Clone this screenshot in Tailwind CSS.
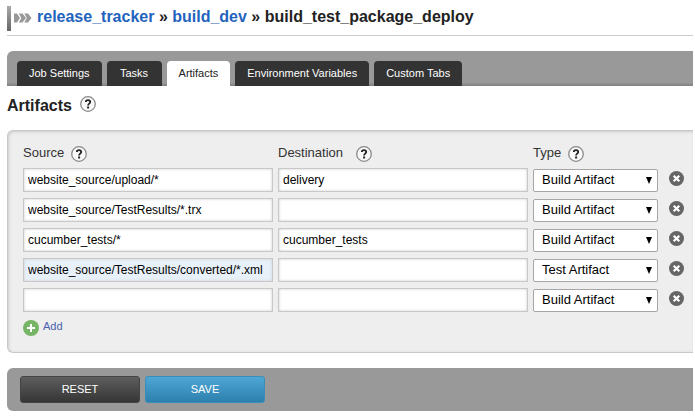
<!DOCTYPE html>
<html lang="en">
<head>
<meta charset="utf-8">
<meta name="viewport" content="width=device-width, initial-scale=1">
<title>build_test_package_deploy - Artifacts</title>
<script src="https://cdn.jsdelivr.net/npm/@tailwindcss/browser@4"></script>
</head>
<body class="bg-white pl-[7px] pr-[2px] font-['Liberation_Sans',Arial,sans-serif] text-[#222]">
<svg class="hidden">
  <symbol id="help" viewBox="0 0 16 16"><circle cx="8" cy="8" r="7.3" fill="#f8f8f8" stroke="#8a8a8a" stroke-width="1.3"/><path d="M5.8 6.1C5.8 3.5 10.2 3.5 10.2 6.1C10.2 7.7 8.1 7.6 8.1 9.4" fill="none" stroke="#222" stroke-width="1.8"/><path d="M7.1 10.5h2v2h-2z" fill="#222"/></symbol>
  <symbol id="remove" viewBox="0 0 15 15"><circle cx="7.5" cy="7.5" r="7.5" fill="#666"/><path d="M4.700 4.700l5.600 5.600M10.300 4.700l-5.600 5.600" stroke="#fff" stroke-width="2.200"/></symbol>
</svg>
<header class="flex h-9 items-start border-b border-[#ccc] pt-[6px]">
  <svg class="mr-[5px] h-[25px] w-[25px]" viewBox="0 0 25 25" aria-hidden="true">
    <defs><linearGradient id="bar" x1="0" y1="0" x2="0" y2="1"><stop offset="0" stop-color="#aaa"/><stop offset="1" stop-color="#666"/></linearGradient></defs>
    <path d="M0 0h4v25H0z" fill="url(#bar)"/>
    <path d="M7 7.500h3l3 4.500-3 4.500H7zM11.800 7.500h3.700l3.500 4.500-3.500 4.500h-3.700l2.500-4.500zM17.300 7.500h3.700l3.500 4.500-3.500 4.500h-3.700l2.500-4.500z" fill="#999"/>
  </svg>
  <h1 class="text-[16px] leading-[22px] font-bold whitespace-nowrap"><a href="#" class="text-[#1f63bd]">release_tracker</a> » <a href="#" class="text-[#1f63bd]">build_dev</a> » build_test_package_deploy</h1>
</header>
<main>
  <nav class="mt-[15px] flex h-[35px] items-end gap-[5px] rounded-tl-md bg-linear-to-b from-[#999] from-90% to-[#808080] pl-[10px] text-center text-[11px] leading-[25px] whitespace-nowrap text-white">
    <a href="#" class="min-w-[55px] rounded-t bg-[#333] px-3">Job Settings</a>
    <a href="#" class="min-w-[55px] rounded-t bg-[#333] px-3">Tasks</a>
    <a href="#" aria-current="page" class="min-w-[55px] rounded-t bg-white px-3 text-[#222]">Artifacts</a>
    <a href="#" class="min-w-[55px] rounded-t bg-[#333] px-3">Environment Variables</a>
    <a href="#" class="min-w-[55px] rounded-t bg-[#333] px-3">Custom Tabs</a>
  </nav>
  <div class="mt-2 flex h-5 items-start gap-2">
    <h2 class="text-[16px] leading-6 font-bold">Artifacts</h2>
    <button type="button" aria-label="Help with artifacts" class="mt-[2px]"><svg class="size-4"><use href="#help"/></svg></button>
  </div>
  <form>
    <section class="mt-4 rounded-l-md border border-r-0 border-[#c8c8c8] bg-[#eee] pt-[9px] pr-[9px] pb-4 pl-[15px] shadow-[inset_1px_1px_3px_#ccc]">
      <table class="w-full table-fixed">
        <colgroup><col><col><col class="w-[130px]"><col class="w-[21px]"></colgroup>
        <thead>
          <tr class="h-[25px] text-left text-[13px] text-[#333]">
            <th scope="col" class="p-0 font-normal"><div class="flex h-[25px] gap-[7px]"><span class="leading-[26px]">Source</span><button type="button" aria-label="Help with source" class="mt-[6px] size-4"><svg class="size-4"><use href="#help"/></svg></button></div></th>
            <th scope="col" class="p-0 font-normal"><div class="flex h-[25px] gap-[13px]"><span class="leading-[26px]">Destination</span><button type="button" aria-label="Help with destination" class="mt-[6px] size-4"><svg class="size-4"><use href="#help"/></svg></button></div></th>
            <th scope="col" class="p-0 font-normal"><div class="flex h-[25px] gap-[7px]"><span class="leading-[26px]">Type</span><button type="button" aria-label="Help with type" class="mt-[6px] size-4"><svg class="size-4"><use href="#help"/></svg></button></div></th>
            <td></td>
          </tr>
        </thead>
        <tbody id="rows"></tbody>
      </table>
      <button type="button" class="mt-[5px] flex gap-1 text-[11px] leading-3 text-[#4a5fb0]">
        <svg class="size-4" viewBox="0 0 16 16" aria-hidden="true"><circle cx="8" cy="8" r="8" fill="#76b565"/><path d="M8 4v8M4 8h8" stroke="#fff" stroke-width="2"/></svg>
        Add
      </button>
    </section>
    <footer class="mt-[15px] flex gap-[5px] rounded-l-md bg-[#999] px-[13px] py-2 text-[11px] text-white">
      <button type="reset" class="h-[27px] w-[120px] rounded-[3px] border border-[#444] bg-linear-to-b from-[#5e5e5e] to-[#363636]">RESET</button>
      <button type="submit" class="h-[27px] w-[120px] rounded-[3px] border border-[#388db9] bg-linear-to-b from-[#4fa7d5] to-[#2b80ae]">SAVE</button>
    </footer>
  </form>
</main>
<template id="row">
  <tr class="h-[30px]">
    <td class="p-0 pr-[5px] align-middle"><input type="text" aria-label="Source" class="block h-6 w-full border border-[#c8c8c8] bg-white px-1 text-[12px] text-black shadow-[inset_0_0_3px_#ccc]"></td>
    <td class="p-0 pr-[5px] align-middle"><input type="text" aria-label="Destination" class="block h-6 w-full border border-[#c8c8c8] bg-white px-1 text-[12px] text-black shadow-[inset_0_0_3px_#ccc]"></td>
    <td class="p-0 pr-[5px] align-middle"><div class="relative"><select aria-label="Type" class="block h-[23px] w-full appearance-none rounded-[2px] border border-[#a6a6a6] bg-white pl-2 text-[13px] text-black"><option>Build Artifact</option><option>Test Artifact</option></select><svg class="pointer-events-none absolute top-2 right-[6px] h-[7px] w-[6px]" viewBox="0 0 6 7" aria-hidden="true"><path d="M0 0h6L3 7z"/></svg></div></td>
    <td class="p-0 align-top"><button type="button" aria-label="Remove artifact" class="mt-[6px] ml-[6px] block size-[15px]"><svg class="size-[15px]"><use href="#remove"/></svg></button></td>
  </tr>
</template>
<script>
const artifacts = [
  ['website_source/upload/*', 'delivery', 'Build Artifact'],
  ['website_source/TestResults/*.trx', '', 'Build Artifact'],
  ['cucumber_tests/*', 'cucumber_tests', 'Build Artifact'],
  ['website_source/TestResults/converted/*.xml', '', 'Test Artifact'],
  ['', '', 'Build Artifact']
];
artifacts.forEach(([source, destination, type], i) => {
  const row = document.getElementById('row').content.cloneNode(true);
  const [src, dest] = row.querySelectorAll('input');
  src.value = source;
  dest.value = destination;
  row.querySelector('select').value = type;
  if (i === 3) src.classList.replace('bg-white', 'bg-[#e8f1fa]');
  document.getElementById('rows').append(row);
});
</script>
</body>
</html>
